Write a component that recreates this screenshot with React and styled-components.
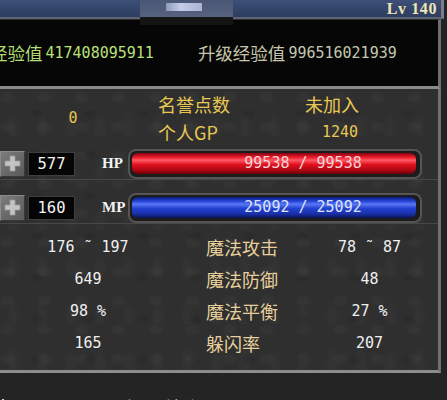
import { Fragment } from "react";
import styled, { createGlobalStyle } from "styled-components";

const GlobalStyle = createGlobalStyle`
  html, body {
    margin: 0;
    padding: 0;
    background: #1e1e1e;
  }
`;

const cjk = `"Noto Sans CJK SC", "Noto Sans", sans-serif`;
const mono = `"DejaVu Sans Mono", "Liberation Mono", "Noto Sans CJK SC", monospace`;
const serif = `"Liberation Serif", "DejaVu Serif", serif`;

const texture = `
  radial-gradient(ellipse at 20% 30%, rgba(255,255,255,0.025) 0 5px, transparent 9px),
  radial-gradient(ellipse at 70% 60%, rgba(0,0,0,0.08) 0 4px, transparent 8px),
  radial-gradient(ellipse at 45% 85%, rgba(255,255,255,0.02) 0 3px, transparent 7px)
`;

const Screen = styled.div`
  width: 447px;
  height: 400px;
  overflow: hidden;
  display: flex;
  flex-direction: column;
  background: #232323;
`;

const Banner = styled.div`
  width: 441px;
  height: 17px;
  flex-shrink: 0;
  display: flex;
  align-items: flex-start;
  justify-content: space-between;
  background: linear-gradient(to bottom, #3d4f78, #33446a 60%, #2e3d5f);
  border-bottom: 2px solid #5e6372;
  border-right: 3px solid #7a7d86;
  box-sizing: content-box;
`;

const NameBlur = styled.div`
  position: relative;
  z-index: 2;
  margin-left: 140px;
  width: 93px;
  height: 25px;
  background: linear-gradient(to bottom, #4a5777 0, #56627e 68%, #161616 68%, #141414 100%);

  &::after {
    content: "";
    position: absolute;
    left: 26px;
    top: 3px;
    width: 36px;
    height: 8px;
    background: linear-gradient(to right, #8f9ab8, #c4cce6 40%, #aab4d2);
  }
`;

const Level = styled.span`
  margin-right: 4px;
  font-family: ${serif};
  font-weight: bold;
  font-size: 16px;
  line-height: 17px;
  color: #eee6b4;
  letter-spacing: 0.6px;
`;

const ExpBox = styled.div`
  width: 438px;
  height: 66px;
  flex-shrink: 0;
  display: flex;
  align-items: center;
  background: #060606;
  border-top: 1px solid #2e2e2e;
  border-bottom: 3px solid #8a8a8a;
  border-right: 3px solid #6e6e6e;
  box-sizing: content-box;
`;

const ExpLabel = styled.span`
  font-family: ${cjk};
  font-size: 17.5px;
  line-height: 20px;
  color: ${(p) => p.$color};
  margin-left: ${(p) => p.$offset}px;
`;

const ExpValue = styled.span`
  font-family: ${mono};
  font-size: 15px;
  line-height: 20px;
  color: ${(p) => p.$color};
  margin-left: 3px;
`;

const Panel = styled.div`
  width: 438px;
  height: 270px;
  flex-shrink: 0;
  padding: 6px 0 5px;
  display: flex;
  flex-direction: column;
  background-color: #2f2f2f;
  background-image: ${texture};
  background-size: 37px 29px, 53px 41px, 29px 47px;
  border-bottom: 3px solid #8c8c8c;
  border-right: 3px solid #707070;
  box-sizing: content-box;
`;

const Honor = styled.div`
  display: grid;
  grid-template-columns: 146px 12px 147px 53px;
  grid-template-rows: 18px 18px;
  row-gap: 10px;
`;

const HonorZero = styled.span`
  grid-column: 1;
  grid-row: 1 / 3;
  align-self: center;
  text-align: center;
  font-family: ${mono};
  font-size: 15px;
  color: #e6c650;
`;

const Gold = styled.span`
  grid-column: ${(p) => p.$col};
  grid-row: ${(p) => p.$row};
  text-align: ${(p) => (p.$right ? "right" : "left")};
  white-space: nowrap;
  font-family: ${(p) => (p.$mono ? mono : cjk)};
  font-size: ${(p) => (p.$mono ? "15px" : "18px")};
  line-height: 18px;
  color: #e8c852;
`;

const BarRow = styled.div`
  height: 32px;
  margin-top: ${(p) => p.$gap}px;
  display: flex;
  align-items: center;
  border-bottom: 1px solid #474747;
  box-sizing: border-box;
`;

const PlusButton = styled.div`
  width: 25px;
  height: 26px;
  display: flex;
  align-items: center;
  justify-content: center;
  background: linear-gradient(135deg, #7c7c7c, #666 60%, #5a5a5a);
  border: 1px solid #3a3a3a;
  border-top-color: #8a8a8a;
  border-left-color: #8a8a8a;
  box-sizing: border-box;
`;

const ValueBox = styled.div`
  width: 47px;
  height: 24px;
  margin-left: 3px;
  display: flex;
  align-items: center;
  justify-content: center;
  background: #050505;
  border: 1px solid #3e3e3e;
  box-sizing: border-box;
  font-family: ${mono};
  font-size: 15.5px;
  color: #f2f2f2;
`;

const StatTag = styled.span`
  width: 26px;
  margin-left: 27px;
  font-family: ${serif};
  font-weight: bold;
  font-size: 15px;
  color: #f4f4f4;
`;

const BarFrame = styled.div`
  width: 294px;
  height: 30px;
  padding: 2px 4px 3px 2px;
  border: 2px solid #555;
  border-radius: 8px;
  background: #1c1c1c;
  box-sizing: border-box;
  display: flex;
`;

const BarFill = styled.div`
  flex: 1;
  display: flex;
  align-items: center;
  justify-content: center;
  padding-left: 58px;
  border-radius: 6px;
  background: ${(p) =>
    p.$kind === "hp"
      ? "linear-gradient(to bottom, #8a0010 0%, #f0202e 22%, #ff5a66 34%, #e0101e 55%, #b00814 80%, #6e000a 100%)"
      : "linear-gradient(to bottom, #0a1a78 0%, #2a4ae0 22%, #5a78f4 34%, #2240d0 55%, #1a30a8 80%, #0a145c 100%)"};
  font-family: ${mono};
  font-size: 15px;
  color: ${(p) => (p.$kind === "hp" ? "#f6d6d8" : "#dde4fa")};
  white-space: pre;
`;

const Stats = styled.div`
  margin-top: 7px;
  display: grid;
  grid-template-columns: 176px 125px 137px;
  grid-auto-rows: 32px;
  align-items: center;
`;

const StatValue = styled.span`
  text-align: center;
  font-family: ${mono};
  font-size: 15px;
  color: #efefef;
  white-space: pre;
`;

const StatLabel = styled.span`
  padding-left: 30px;
  font-family: ${cjk};
  font-size: 18px;
  color: #e6cf9c;
`;

const Footer = styled.div`
  flex: 1;
  display: flex;
  align-items: flex-start;
  padding-top: 24px;
  background: #242424;
  overflow: hidden;
`;

const FooterMark = styled.span`
  width: 2px;
  height: 12px;
  margin: 2px 0 0 2px;
  background: #d8d8d8;
`;

const FooterText = styled.span`
  margin-left: 121px;
  font-family: ${cjk};
  font-size: 18px;
  line-height: 20px;
  color: #d6d6d6;
`;

const PlusIcon = () => (
  <svg width="17" height="17" viewBox="0 0 17 17">
    <path d="M6 1h5v5h5v5h-5v5H6v-5H1V6h5z" fill="#c4c4c4" stroke="#9a9a9a" strokeWidth="0.8" />
  </svg>
);

const stats = [
  ["176 ˜ 197", "魔法攻击", "78 ˜ 87"],
  ["649", "魔法防御", "48"],
  ["98 %", "魔法平衡", "27 %"],
  ["165", "躲闪率", "207"],
];

export default function App() {
  return (
    <Screen>
      <GlobalStyle />
      <Banner>
        <NameBlur />
        <Level>Lv 140</Level>
      </Banner>
      <ExpBox>
        <ExpLabel $color="#b2dc72" $offset={-10}>经验值</ExpLabel>
        <ExpValue $color="#b8e07a">417408095911</ExpValue>
        <ExpLabel $color="#c6c6ac" $offset={44}>升级经验值</ExpLabel>
        <ExpValue $color="#c2c8ae">996516021939</ExpValue>
      </ExpBox>
      <Panel>
        <Honor>
          <HonorZero>0</HonorZero>
          <Gold $col={3} $row={1}>名誉点数</Gold>
          <Gold $col={4} $row={1} $right>未加入</Gold>
          <Gold $col={3} $row={2}>个人GP</Gold>
          <Gold $col={4} $row={2} $right $mono>1240</Gold>
        </Honor>
        <BarRow $gap={7}>
          <PlusButton><PlusIcon /></PlusButton>
          <ValueBox>577</ValueBox>
          <StatTag>HP</StatTag>
          <BarFrame>
            <BarFill $kind="hp">99538 / 99538</BarFill>
          </BarFrame>
        </BarRow>
        <BarRow $gap={12}>
          <PlusButton><PlusIcon /></PlusButton>
          <ValueBox>160</ValueBox>
          <StatTag>MP</StatTag>
          <BarFrame>
            <BarFill $kind="mp">25092 / 25092</BarFill>
          </BarFrame>
        </BarRow>
        <Stats>
          {stats.map(([left, label, right]) => (
            <Fragment key={label}>
              <StatValue>{left}</StatValue>
              <StatLabel>{label}</StatLabel>
              <StatValue>{right}</StatValue>
            </Fragment>
          ))}
        </Stats>
      </Panel>
      <Footer>
        <FooterMark />
        <FooterText>相遇 情缘</FooterText>
      </Footer>
    </Screen>
  );
}
